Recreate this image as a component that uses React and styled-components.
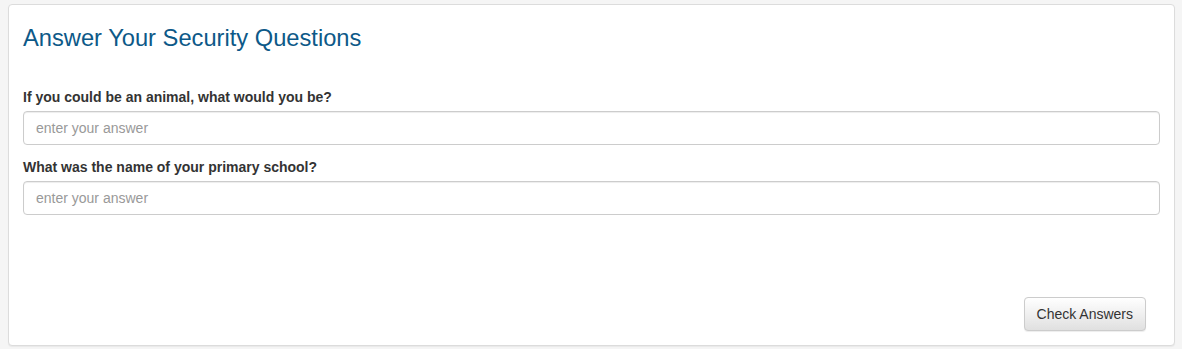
import React, { useState } from "react";
import styled, { createGlobalStyle } from "styled-components";

const GlobalStyle = createGlobalStyle`
  html, body {
    margin: 0;
    background-color: #f5f5f5;
    font-family: "Liberation Sans", Arial, sans-serif;
  }
`;

const Page = styled.div`
  padding: 4px 7px 3px 8px;
`;

const Panel = styled.form`
  box-sizing: border-box;
  height: 342px;
  background-color: #fff;
  border: 1px solid #dcdcdc;
  border-radius: 4px;
  box-shadow: 0 1px 1px rgba(0, 0, 0, 0.05);
  padding: 20px 14px 14px 14px;
  display: flex;
  flex-direction: column;
`;

const Title = styled.h2`
  margin: 0 0 36px 0;
  font-size: 23.7px;
  line-height: 26px;
  font-weight: 400;
  color: #0d5988;
`;

const Group = styled.div`
  margin-bottom: 12px;
`;

const Label = styled.label`
  display: block;
  font-size: 14px;
  line-height: 20px;
  font-weight: 700;
  color: #333;
  margin-bottom: 4px;
`;

const Input = styled.input`
  box-sizing: border-box;
  display: block;
  width: 100%;
  height: 34px;
  padding: 6px 12px;
  font-family: inherit;
  font-size: 14px;
  color: #555;
  background-color: #fff;
  border: 1px solid #ccc;
  border-radius: 4px;
  box-shadow: inset 0 1px 1px rgba(0, 0, 0, 0.075);
  outline: none;

  &::placeholder {
    color: #999;
  }
`;

const Footer = styled.div`
  margin-top: auto;
  display: flex;
  justify-content: flex-end;
  padding-right: 14px;
`;

const Button = styled.button`
  height: 34px;
  padding: 6px 12px;
  font-family: inherit;
  font-size: 14px;
  color: #333;
  background-image: linear-gradient(to bottom, #fff 0, #e0e0e0 100%);
  border: 1px solid #ccc;
  border-radius: 4px;
  box-shadow: inset 0 1px 0 rgba(255, 255, 255, 0.15), 0 1px 1px rgba(0, 0, 0, 0.075);
  cursor: pointer;
`;

const questions = [
  { id: "animal", text: "If you could be an animal, what would you be?" },
  { id: "school", text: "What was the name of your primary school?" },
];

function App() {
  const [answers, setAnswers] = useState({});

  return (
    <Page>
      <GlobalStyle />
      <Panel onSubmit={(e) => e.preventDefault()}>
        <Title>Answer Your Security Questions</Title>
        {questions.map((q) => (
          <Group key={q.id}>
            <Label htmlFor={q.id}>{q.text}</Label>
            <Input
              id={q.id}
              type="text"
              placeholder="enter your answer"
              value={answers[q.id] || ""}
              onChange={(e) => setAnswers({ ...answers, [q.id]: e.target.value })}
            />
          </Group>
        ))}
        <Footer>
          <Button type="submit">Check Answers</Button>
        </Footer>
      </Panel>
    </Page>
  );
}

export default App;
